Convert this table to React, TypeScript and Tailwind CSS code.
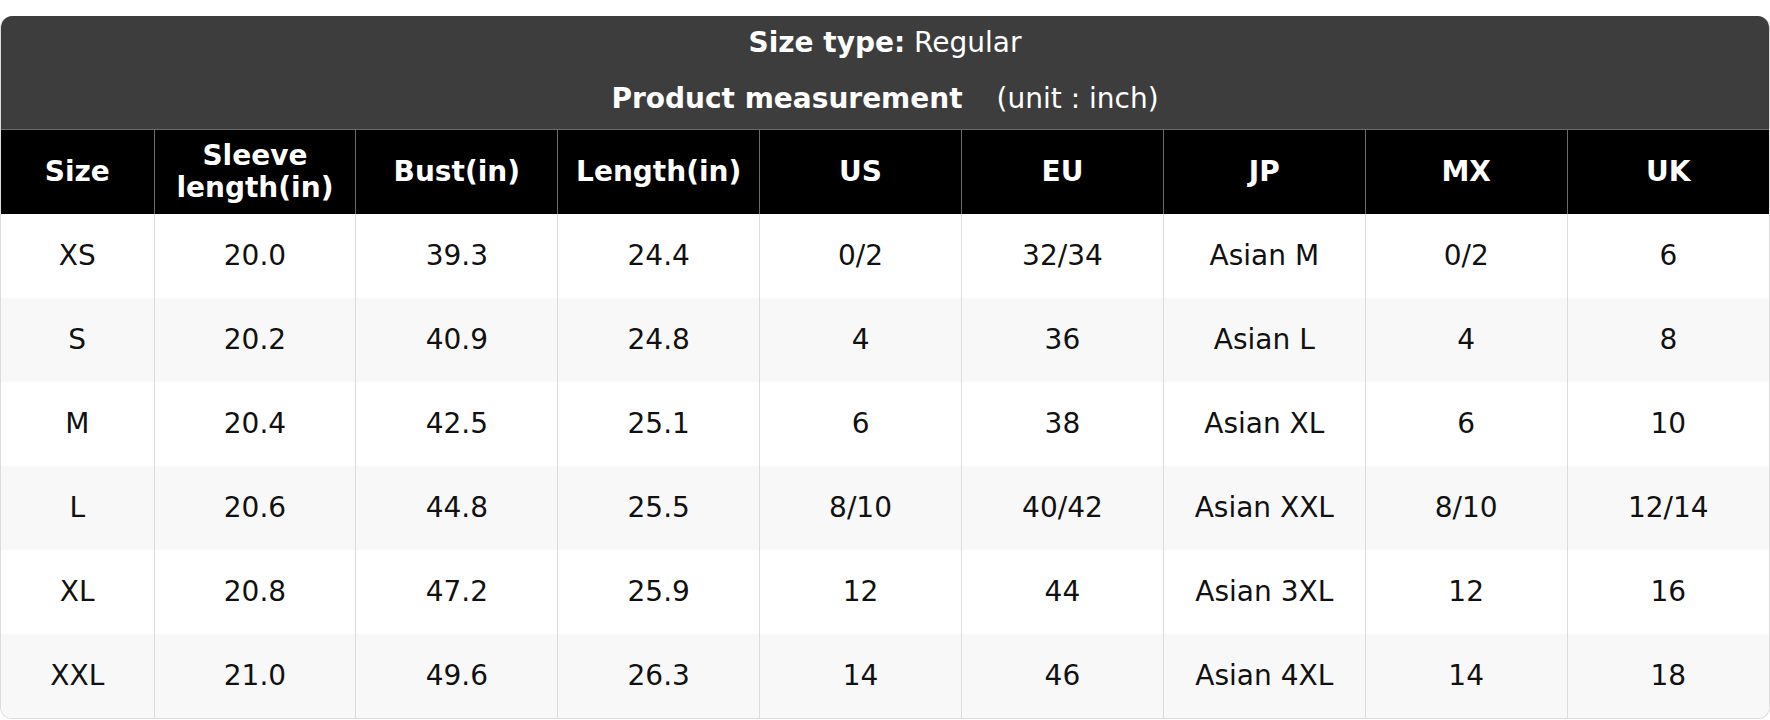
const headers = ["Size", "Sleeve length(in)", "Bust(in)", "Length(in)", "US", "EU", "JP", "MX", "UK"];

const rows = [
  ["XS", "20.0", "39.3", "24.4", "0/2", "32/34", "Asian M", "0/2", "6"],
  ["S", "20.2", "40.9", "24.8", "4", "36", "Asian L", "4", "8"],
  ["M", "20.4", "42.5", "25.1", "6", "38", "Asian XL", "6", "10"],
  ["L", "20.6", "44.8", "25.5", "8/10", "40/42", "Asian XXL", "8/10", "12/14"],
  ["XL", "20.8", "47.2", "25.9", "12", "44", "Asian 3XL", "12", "16"],
  ["XXL", "21.0", "49.6", "26.3", "14", "46", "Asian 4XL", "14", "18"],
];

export default function App() {
  return (
    <div className="min-h-screen bg-white pt-4 font-['DejaVu_Sans',sans-serif]">
      <div className="rounded-[12px] overflow-hidden border border-[#dcdcdc] border-t-0">
        {/* Title block */}
        <div className="bg-[#3d3d3d] h-[113px] flex flex-col items-center pt-[11px] gap-[24px] text-white text-[28px] leading-[32px]">
          <div>
            <span className="font-bold">Size type:</span> Regular
          </div>
          <div>
            <span className="font-bold">Product measurement</span>
            <span className="ml-[34px]">(unit : inch)</span>
          </div>
        </div>

        <table className="w-full table-fixed border-collapse text-center">
          <colgroup>
            <col className="w-[153px]" />
            {headers.slice(1).map((h) => (
              <col key={h} />
            ))}
          </colgroup>
          <thead>
            <tr className="bg-black text-white h-[84px] border-t border-[#6a6a6a]">
              {headers.map((h, i) => (
                <th
                  key={h}
                  className={`font-bold text-[28px] leading-[32px] px-2 ${i > 0 ? "border-l border-[#6a6a6a]" : ""}`}
                >
                  {h === "Sleeve length(in)" ? (
                    <>
                      Sleeve
                      <br />
                      length(in)
                    </>
                  ) : (
                    h
                  )}
                </th>
              ))}
            </tr>
          </thead>
          <tbody>
            {rows.map((r, ri) => (
              <tr key={r[0]} className={`h-[84px] ${ri % 2 === 1 ? "bg-[#f8f8f8]" : "bg-white"}`}>
                {r.map((c, ci) => (
                  <td
                    key={ci}
                    className={`text-[28px] text-[#111] ${ci > 0 ? "border-l border-[#dcdcdc]" : ""}`}
                  >
                    {c}
                  </td>
                ))}
              </tr>
            ))}
          </tbody>
        </table>
      </div>
    </div>
  );
}
